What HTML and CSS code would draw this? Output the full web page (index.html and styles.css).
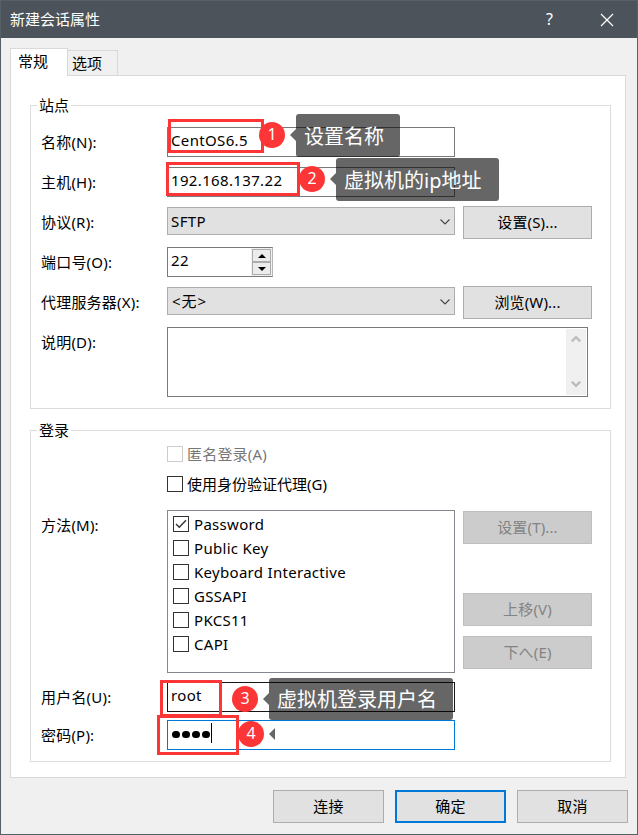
FILE: index.html
```html
<!DOCTYPE html>
<html lang="zh-CN">
<head>
<meta charset="utf-8">
<title>新建会话属性</title>
<link rel="stylesheet" href="styles.css">
</head>
<body>
<div class="window">
  <header class="titlebar">
    <span class="title">新建会话属性</span>
    <span class="help">?</span>
    <svg class="close" width="14" height="14" viewBox="0 0 14 14"><path d="M1 1 13 13M13 1 1 13"/></svg>
  </header>

  <nav class="tabs">
    <div class="tab active">常规</div>
    <div class="tab">选项</div>
  </nav>

  <main class="panel">
    <section class="group site">
      <h2 class="legend">站点</h2>
      <div class="row"><label>名称(N):</label><div class="input name">CentOS6.5</div></div>
      <div class="row"><label>主机(H):</label><div class="input host">192.168.137.22</div></div>
      <div class="row">
        <label>协议(R):</label>
        <div class="select"><span>SFTP</span><svg width="10" height="6" viewBox="0 0 10 6"><path d="M.5 .5 5 5 9.5 .5"/></svg></div>
        <div class="button">设置(S)...</div>
      </div>
      <div class="row">
        <label>端口号(O):</label>
        <div class="spinner">
          <span class="value">22</span>
          <div class="steps">
            <div class="step"><svg width="8" height="4" viewBox="0 0 8 4"><path d="M0 4 4 0 8 4Z"/></svg></div>
            <div class="step"><svg width="8" height="4" viewBox="0 0 8 4"><path d="M0 0 4 4 8 0Z"/></svg></div>
          </div>
        </div>
      </div>
      <div class="row">
        <label>代理服务器(X):</label>
        <div class="select"><span class="none">&lt;无&gt;</span><svg width="10" height="6" viewBox="0 0 10 6"><path d="M.5 .5 5 5 9.5 .5"/></svg></div>
        <div class="button">浏览(W)...</div>
      </div>
      <div class="row">
        <label>说明(D):</label>
        <div class="textarea">
          <div class="scrollbar">
            <svg width="10" height="8" viewBox="0 0 10 8"><path d="M.7 6.5 5 2.2 9.3 6.5"/></svg>
            <svg width="10" height="8" viewBox="0 0 10 8"><path d="M.7 1.5 5 5.8 9.3 1.5"/></svg>
          </div>
        </div>
      </div>
    </section>

    <section class="group login">
      <h2 class="legend">登录</h2>
      <div class="options">
        <div class="check disabled"><i class="box"></i><span>匿名登录(A)</span></div>
        <div class="check"><i class="box"></i><span>使用身份验证代理(G)</span></div>
      </div>
      <div class="row methods">
        <label>方法(M):</label>
        <div class="list">
          <div class="check"><i class="box"><svg width="14" height="14" viewBox="0 0 14 14"><path d="M2 7 5.3 10.3 12 3.2"/></svg></i><span>Password</span></div>
          <div class="check"><i class="box"></i><span>Public Key</span></div>
          <div class="check"><i class="box"></i><span>Keyboard Interactive</span></div>
          <div class="check"><i class="box"></i><span>GSSAPI</span></div>
          <div class="check"><i class="box"></i><span>PKCS11</span></div>
          <div class="check"><i class="box"></i><span>CAPI</span></div>
        </div>
        <div class="side">
          <div class="button off">设置(T)...</div>
          <div class="button off up">上移(V)</div>
          <div class="button off">下へ(E)</div>
        </div>
      </div>
      <div class="row user"><label>用户名(U):</label><div class="input hover">root</div></div>
      <div class="row"><label>密码(P):</label><div class="input focus"><i class="dot"></i><i class="dot"></i><i class="dot"></i><i class="dot"></i><i class="caret"></i></div></div>
    </section>
  </main>

  <footer class="actions">
    <div class="button">连接</div>
    <div class="button primary">确定</div>
    <div class="button">取消</div>
  </footer>

  <div class="frame frame-1"></div>
  <div class="frame frame-2"></div>
  <div class="frame frame-3"></div>
  <div class="frame frame-4"></div>
  <div class="badge badge-1">1</div>
  <div class="badge badge-2">2</div>
  <div class="badge badge-3">3</div>
  <div class="badge badge-4">4</div>
  <div class="tip tip-1">设置名称</div>
  <div class="tip tip-2">虚拟机的ip地址</div>
  <div class="tip tip-3">虚拟机登录用户名</div>
  <div class="tip tip-4"></div>
</div>
</body>
</html>
```
FILE: styles.css
```css
* { box-sizing: border-box; }
body {
  margin: 0;
  font: 15px/20px "Noto Sans", "Noto Sans CJK SC", sans-serif;
  color: #000;
}
svg { display: block; fill: none; }
.window {
  position: relative;
  width: 638px;
  height: 835px;
  border: 1px solid #566067;
  background: #f0f0f0;
  overflow: hidden;
  white-space: nowrap;
}
.titlebar {
  display: flex;
  align-items: center;
  height: 37px;
  padding: 0 23px 0 9px;
  background: #4c535a;
  color: #fff;
}
.title { flex: 1; padding-bottom: 2px; }
.help { width: 8px; margin-right: 46px; padding-bottom: 2px; font-size: 16px; }
.close { stroke: #fff; stroke-width: 1.2; }

.tabs {
  display: flex;
  align-items: flex-end;
  height: 37px;
  padding-left: 9px;
}
.tab {
  width: 50px;
  height: 25px;
  padding: 2px 0 0 4px;
  border: 1px solid #d9d9d9;
  border-width: 1px 1px 0 0;
}
.tab.active {
  position: relative;
  width: 58px;
  height: 28px;
  margin-bottom: -1px;
  padding: 2px 0 0 7px;
  border-left-width: 1px;
  background: #fff;
}
.panel {
  width: 616px;
  height: 703px;
  margin-left: 9px;
  padding: 29px 14px 0 19px;
  border: 1px solid #d9d9d9;
  background: #fff;
}
.group {
  width: 581px;
  border: 1px solid #dcdcdc;
}
.site { height: 304px; }
.login { height: 332px; margin-top: 21px; }
.legend {
  width: 34px;
  height: 20px;
  margin: -11px 0 0 6px;
  padding-left: 2px;
  background: #fff;
  font: inherit;
}
.row {
  display: flex;
  align-items: flex-start;
  height: 30px;
  margin: 0 0 10px 10px;
}
.site .legend + .row { margin-top: 12px; }
.row label {
  flex: none;
  width: 126px;
  padding-top: 5px;
  letter-spacing: .2px;
}
.input {
  display: flex;
  width: 288px;
  height: 30px;
  padding: 2px 3px;
  border: 1px solid #7a7a7a;
  letter-spacing: .35px;
}
.select {
  display: flex;
  justify-content: space-between;
  width: 288px;
  height: 28px;
  padding: 3px 4px 0 3px;
  border: 1px solid #adadad;
  background: #e1e1e1;
  letter-spacing: .4px;
}
.select .none { letter-spacing: 1px; padding-left: 1px; }
.select svg { margin-top: 8px; stroke: #444; stroke-width: 1.1; }
.button {
  display: flex;
  align-items: center;
  justify-content: center;
  width: 129px;
  height: 33px;
  padding-bottom: 1px;
  border: 1px solid #adadad;
  background: #e1e1e1;
  letter-spacing: .15px;
}
.row > .button { margin: -1px 0 0 8px; }
.button.off {
  border-color: #bfbfbf;
  background: #ccc;
  color: #838383;
}
.spinner {
  display: flex;
  width: 106px;
  height: 30px;
  border: 1px solid #7a7a7a;
  border-right-color: #b5b5b5;
}
.value { flex: 1; padding: 2px 3px; letter-spacing: .4px; }
.steps {
  width: 21px;
  padding: 1px;
  background: #f0f0f0;
}
.step {
  display: flex;
  align-items: center;
  justify-content: center;
  width: 19px;
  height: 13px;
  border: 1px solid #acacac;
  background: #ececec;
}
.step svg { fill: #000; }
.textarea {
  display: flex;
  justify-content: flex-end;
  width: 421px;
  height: 70px;
  padding: 1px;
  border: 1px solid #7a7a7a;
}
.scrollbar {
  display: flex;
  flex-direction: column;
  align-items: center;
  justify-content: space-between;
  width: 20px;
  padding: 6px 0 7px;
  background: #f0f0f0;
}
.scrollbar svg { stroke: #bcbcbc; stroke-width: 2.4; }

.options { padding: 4px 0 0 136px; }
.check {
  display: flex;
  align-items: center;
  gap: 5px;
  height: 20px;
}
.options .check { margin-bottom: 10px; gap: 4px; }
.options .disabled { letter-spacing: .2px; }
.box {
  width: 16px;
  height: 16px;
  border: 1px solid #333;
  background: #fff;
}
.box svg { stroke: #333; stroke-width: 1.4; }
.disabled { color: #777; }
.disabled .box { border-color: #ccc; }
.row.methods { height: 163px; margin: 16px 0 9px 10px; }
.list {
  width: 288px;
  height: 163px;
  padding: 3px 5px;
  border: 1px solid #828790;
  letter-spacing: .3px;
}
.list .check { margin-bottom: 4px; }
.side { padding: 1px 0 0 8px; }
.button.up { margin: 49px 0 10px; }
.user { margin-bottom: 8px; }
.hover { border-color: #171717; }
.focus { padding: 2px 4px; border-color: #0078d7; align-items: center; }
.dot {
  width: 7.5px;
  height: 7.5px;
  margin: -1px 2.5px 0 0;
  border-radius: 50%;
  background: #000;
}
.caret { width: 1px; height: 20px; margin: -4px 0 0 -1px; background: #000; }

.actions {
  display: flex;
  justify-content: flex-end;
  gap: 11px;
  padding: 12px 9px 0 0;
}
.actions .button { width: 111px; }
.button.primary { border: 2px solid #0078d7; }

.frame { position: absolute; border: 3px solid #fc3636; }
.frame-1 { left: 167px; top: 118px; width: 96px; height: 34px; }
.frame-2 { left: 165px; top: 161px; width: 134px; height: 34px; }
.frame-3 { left: 159px; top: 679px; width: 62px; height: 37px; }
.frame-4 { left: 156px; top: 714px; width: 82px; height: 40px; }
.badge {
  position: absolute;
  width: 26px;
  height: 26px;
  border-radius: 50%;
  background: #fc3636;
  color: #fff;
  font-size: 16px;
  line-height: 24px;
  text-align: center;
}
.badge-1 { left: 258px; top: 121px; }
.badge-2 { left: 298px; top: 165px; }
.badge-3 { left: 231px; top: 685px; }
.badge-4 { left: 237px; top: 720px; }
.tip {
  position: absolute;
  height: 43px;
  padding-left: 8px;
  border-radius: 3px;
  background: rgba(0, 0, 0, .6);
  color: #fff;
  font-size: 20px;
  line-height: 45px;
}
.tip::before {
  content: "";
  position: absolute;
  left: -6px;
  top: 15px;
  border: solid transparent;
  border-width: 6px 6px 6px 0;
  border-right-color: rgba(0, 0, 0, .6);
}
.tip-1 { left: 295px; top: 113px; width: 104px; }
.tip-2 { left: 335px; top: 157px; width: 163px; }
.tip-3 { left: 268px; top: 677px; width: 184px; height: 42px; line-height: 43px; }
.tip-4 { left: 274px; top: 712px; width: 0; padding: 0; }
```
